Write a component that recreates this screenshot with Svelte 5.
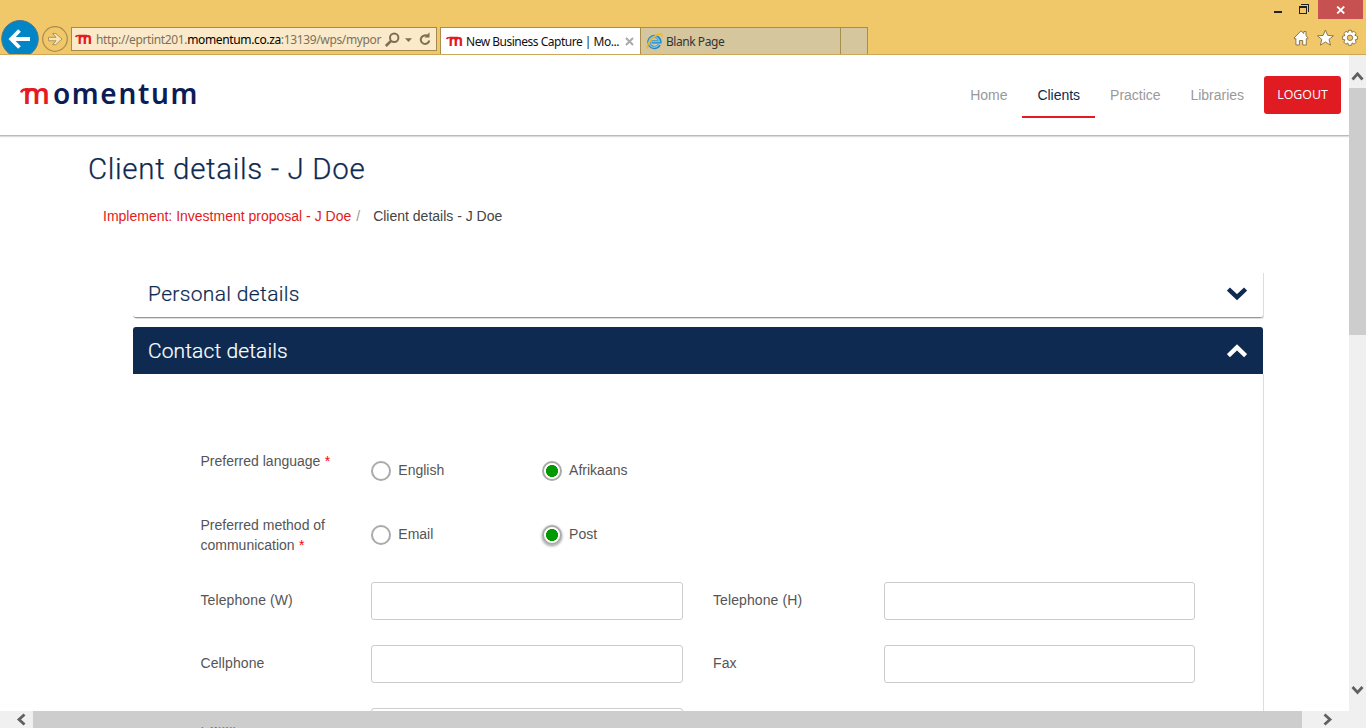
<script>
  const links = ['Home', 'Clients', 'Practice', 'Libraries'];
  const choices = [
    { label: 'Preferred language', options: ['English', 'Afrikaans'] },
    { label: 'Preferred method of communication', options: ['Email', 'Post'] }
  ];
  const fields = [['Telephone (W)', 'Telephone (H)'], ['Cellphone', 'Fax'], ['']];
</script>

{#snippet brand()}
  <svg class="brand" width="17" height="18" viewBox="0 0 17 18">
    <text x="2.4" y="12.5" textLength="14.6" lengthAdjust="spacingAndGlyphs">m</text>
    <path d="M.7 6C1 4.5 2 4.5 4 4.5H12" />
  </svg>
{/snippet}

<div class="window">
  <div class="chrome">
    <div class="bar">
      <svg class="nav-buttons" width="71" height="36" viewBox="0 0 71 36">
        <circle cx="20" cy="20.8" r="18.3" fill="#0085c7" stroke="#54748a" stroke-width="1" />
        <path d="M30 21H12M19.5 12.5L11.2 21L19.5 29.5" fill="none" stroke="#fff" stroke-width="3.8" />
        <circle cx="55" cy="21" r="12.3" fill="none" stroke="#a88c50" stroke-width="1.2" />
        <path d="M48.5 19.3H56L52.5 15.5H55.8L62 21L55.8 26.7H52.5L56 22.8H48.5Z" fill="#f8e4b8" stroke="#b09455" stroke-width="1" />
      </svg>
      <div class="address">
        {@render brand()}
        <span class="url">http://eprtint201.<b>momentum.co.za</b>:13139/wps/mypor</span>
        <svg width="50" height="22" viewBox="0 0 50 22" fill="none" stroke="#7d6f52" stroke-width="2">
          <circle cx="8.2" cy="9.8" r="4.2" />
          <path d="M5.2 12.8L-.2 18" stroke-width="2.6" />
          <path d="M19 10.2H26L22.5 14Z" fill="#7d6f52" stroke="none" />
          <path d="M42 8.5A4.3 4.3 0 1 0 43.3 12.5" />
          <path d="M43.5 4.2V9.5H38.5Z" fill="#7d6f52" stroke="none" />
        </svg>
      </div>
      <div class="tab active">
        {@render brand()}
        <span class="tab-one">New Business Capture | Mo...</span>
        <svg class="close-tab" width="9" height="9" viewBox="0 0 9 9"><path d="M1 1L8 8M8 1L1 8" stroke="#aaa" stroke-width="2" /></svg>
      </div>
      <div class="tab blank">
        <svg width="17" height="17" viewBox="0 0 17 17" fill="none">
          <path d="M13.3 11.7A5.6 5.6 0 1 1 14 8.9H5.5" stroke="#2686c5" stroke-width="3.2" />
          <path d="M12.7 11.7A5.2 5.2 0 1 1 13.4 8.6H5.5" stroke="#69c4ef" stroke-width="1.5" />
          <path d="M2.2 15.5C-.2 14 3 7.5 8 3.8C12 .8 16.5-.1 15.8 3.6" stroke="#f2b91d" stroke-width="1.7" />
        </svg>
        <span class="tab-two">Blank Page</span>
      </div>
      <div class="tab new"></div>
    </div>
    <div class="window-tools">
      <div class="window-buttons">
        <svg width="54" height="19" viewBox="0 0 54 19" fill="none" stroke="#222" shape-rendering="crispEdges">
          <path d="M10 12H18" stroke-width="2" />
          <path d="M35.5 6.5H42.5V13.5H35.5Z" stroke-width="1" />
          <path d="M35 7.5H43M37 4.5H44.5V12" stroke-width="1" />
        </svg>
        <div class="close"><svg width="10" height="8" viewBox="0 0 10 8"><path d="M1.2.5L8.2 7.5M8.2.5L1.2 7.5" stroke="#fff" stroke-width="1.8" /></svg></div>
      </div>
      <svg class="tools" width="68" height="18" viewBox="0 0 68 18" fill="#fff" stroke="#8e7848" stroke-width="1">
        <path d="M1 9L8 1.8L10.8 4.5V2.5H13V6.8L15.3 9L14.2 10.3L13.3 9.5V16H9.7V11.5H6.4V16H2.9V9.5L2 10.3Z" />
        <path d="M32.4 1L34.7 6.4L40.4 6.8L36 10.4L37.5 16.2L32.4 13L27.3 16.2L28.8 10.4L24.4 6.8L30.1 6.4Z" />
        <g transform="translate(57 8.8)">
          <path d="M-1.5-7.5H1.5L1.9-5.4L3.8-6.6L6-4.4L4.9-2.5L7.4-1.6V1.6L5.2 2L6.2 4.3L4.2 6.4L2.2 5.1L1.5 7.5H-1.5L-2.1 5.2L-4.1 6.4L-6.2 4.3L-5.1 2L-7.4 1.6V-1.6L-5.1-2.2L-6-4.4L-3.9-6.6L-2-5.2Z" />
          <circle r="2.7" fill="#f0c869" />
        </g>
      </svg>
    </div>
  </div>

  <div class="viewport">
    <div class="page">
      <header>
        <div class="logo">
          <svg width="13" height="8" viewBox="0 0 13 8"><path d="M1.2 5.6C1.8 2.6 3.5 2.3 12.5 2.3" fill="none" stroke="#e31b23" stroke-width="2.6" /></svg>
          <span class="red">m</span><span class="navy">omentum</span>
        </div>
        <nav>
          {#each links as link}
            <span class="link" class:current={link === 'Clients'}>{link}</span>
          {/each}
          <button>LOGOUT</button>
        </nav>
      </header>
      <main>
        <h1>Client details - J Doe</h1>
        <div class="crumbs"><span class="crumb">Implement: Investment proposal - J Doe</span><span class="slash">/</span><span>Client details - J Doe</span></div>
        <section class="panel personal">
          <h2>Personal details</h2>
          <svg width="20" height="14" viewBox="0 0 20 14"><path d="M1.4 2L10 10.2L18.6 2" /></svg>
        </section>
        <section class="panel contact">
          <h2>Contact details</h2>
          <svg width="20" height="14" viewBox="0 0 20 14"><path d="M1.4 11.6L10 3.4L18.6 11.6" /></svg>
        </section>
        <div class="form">
          {#each choices as choice}
            <div class="row choice">
              <div class="label">{choice.label}&nbsp;<i>*</i></div>
              {#each choice.options as option, n}
                <div class="option"><span class="radio" class:on={n === 1} class:focus={option === 'Post'}></span>{option}</div>
              {/each}
            </div>
          {/each}
          {#each fields as pair}
            <div class="row">
              {#each pair as field}
                <div class="field-label">{field}</div>
                <div class="input"></div>
              {/each}
            </div>
          {/each}
        </div>
      </main>
    </div>
    <div class="vbar">
      <svg width="17" height="33" viewBox="0 0 17 33"><path d="M3.5 24.5L8.5 18.8L13.5 24.5" /></svg>
      <div class="vthumb"></div>
      <svg width="17" height="17" viewBox="0 0 17 17"><path d="M3.5 3L8.5 8.5L13.5 3" /></svg>
    </div>
  </div>
  <div class="hbar">
    <svg width="33" height="17" viewBox="0 0 33 17"><path d="M24.5 3.5L19 8.5L24.5 13.5" /></svg>
    <div class="hthumb"><div class="peek">Email</div></div>
    <svg width="64" height="17" viewBox="0 0 64 17"><path d="M22.5 3.5L28 8.5L22.5 13.5" /></svg>
  </div>
</div>

<style>
  :global(body) { margin: 0; overflow: hidden; }
  * { box-sizing: border-box; }
  svg { display: block; flex: none; }
  .window { position: relative; width: 1366px; height: 728px; overflow: hidden; background: #fff; font-family: "Liberation Sans", Arial, sans-serif; font-size: 14px; }
  .chrome { height: 55px; background: #f0c869; border-bottom: 1px solid #cda757; display: flex; justify-content: space-between; overflow: hidden; }
  .bar { display: flex; padding-top: 27px; font: 12px/26px "Noto Sans", sans-serif; white-space: nowrap; }
  .nav-buttons { margin-top: -9px; }
  .address { width: 366px; height: 24px; border: 1px solid #a48a4c; background: #faeaca; display: flex; padding-left: 3px; margin-right: 3px; color: #7c715a; }
  .brand { margin-top: 3px; overflow: visible; }
  .brand text { font: 700 16px "Noto Sans", sans-serif; fill: #e31b23; }
  .brand path { fill: none; stroke: #e31b23; stroke-width: 1.7; }
  .url { width: 292px; margin-left: 4px; line-height: 24px; overflow: hidden; letter-spacing: -.36px; }
  .url b { color: #000; font-weight: 400; }
  .address svg:last-child { margin-left: -2px; overflow: visible; }
  .tab { height: 28px; border: 1px solid #a88d4c; border-bottom: 0; border-left-width: 0; display: flex; }
  .active { width: 201px; background: #fff; padding-left: 5px; border-left-width: 1px; color: #111; }
  .active .brand { margin-top: 5px; }
  .tab-one { width: 155px; margin-left: 3px; letter-spacing: -.49px; line-height: 27px; }
  .close-tab { margin: 9px 0 0 4px; }
  .blank { width: 200px; background: #d6c69e; padding: 5px; color: #333; }
  .tab-two { line-height: 18px; margin-left: 3px; letter-spacing: -.45px; }
  .new { width: 27px; background: #d6c69e; }
  .window-tools { width: 102px; }
  .window-buttons { display: flex; }
  .close { width: 45px; height: 19px; background: #c75050; display: grid; place-items: center; }
  .tools { margin: 10px 0 0 29px; }

  .viewport { height: 673px; display: flex; }
  .page { width: 1349px; height: 673px; overflow: hidden; flex: none; }
  header { height: 81px; border-bottom: 1px solid #bbb; box-shadow: 0 1px 1px #ddd; display: flex; justify-content: space-between; padding: 21px 8px 0 20px; }
  .logo { position: relative; height: 38px; font: 600 28px/35px "Noto Sans", sans-serif; white-space: nowrap; padding-left: 3px; }
  .logo svg { position: absolute; left: 0; top: 11px; }
  .red { color: #e31b23; }
  .navy { color: #0c1c54; letter-spacing: 1.65px; margin-left: 3px; }
  nav { display: flex; color: #999; }
  .link { height: 42px; padding: 0 15px; line-height: 39px; font-size: 14px; letter-spacing: -.02px; }
  .current { color: #0e2a50; border-bottom: 2px solid #e31b23; }
  button { width: 77px; height: 38px; margin-left: 5px; border: 0; border-radius: 3px; background: #e11b22; color: #fff; padding: 0 0 2px; font: 12.4px "Open Sans", sans-serif; }
  main { padding: 15px 86px 0 88px; }
  h1 { margin: 0; height: 37px; font: 300 29.5px/36px Roboto, sans-serif; letter-spacing: .65px; color: #0e2a50; -webkit-text-stroke: .25px #0e2a50; }
  .crumbs { display: flex; height: 20px; margin: 18px 0 46px 15px; line-height: 20px; color: #444; white-space: pre; }
  .crumb { color: #e11b22; }
  .slash { color: #999; margin: 0 13px 0 5px; }
  .panel { height: 46px; width: 1130px; margin-left: 45px; padding: 0 16px 2px 15px; display: flex; justify-content: space-between; align-items: center; }
  .panel path { fill: none; stroke: #0e2a50; stroke-width: 4.4; stroke-linecap: butt; }
  .personal { border-bottom: 1px solid #999; border-radius: 0 0 3px 3px; box-shadow: 1px 1px 0 #ddd; }
  .contact { height: 47px; margin-top: 9px; padding-bottom: 0; background: #0e2a50; border-radius: 3px 3px 0 0; }
  .contact path { stroke: #fff; }
  h2 { margin: 0; font: 300 21px/30px Roboto, sans-serif; letter-spacing: .34px; color: #0e2a50; -webkit-text-stroke: .2px #0e2a50; }
  .contact h2 { color: #fff; letter-spacing: .1px; -webkit-text-stroke-color: #fff; }
  .form { margin-left: 45px; width: 1131px; border-right: 1px solid #ddd; height: 420px; padding: 65px 0 0 67.5px; color: #555; line-height: 20px; }
  .row { display: grid; grid-template-columns: 170.8px 311.7px 170.8px 311.7px; height: 63px; padding-top: 12px; }
  .row > :nth-child(3) { margin-left: 30px; }
  .row > :nth-child(4) { margin-left: 30px; width: 311px; }
  .choice { grid-template-columns: repeat(3, 170.8px); height: 64px; }
  .choice > :nth-child(3) { margin-left: 0; }
  .choice:nth-child(2) { height: 67px; }
  .label { width: 140px; }
  i { color: red; font-style: normal; margin-left: .5px; }
  .option { display: flex; padding-top: 9px; height: 32px; }
  .radio { width: 20px; height: 20px; border: 2px solid #aaa; border-radius: 50%; margin: 1px 7px 0 0; }
  .on { background: radial-gradient(circle, #090 5.7px, #fff 6.3px); }
  .focus { box-shadow: 0 1px 3px #888; }
  .field-label { padding-top: 8px; letter-spacing: .1px; }
  .input { height: 38px; border: 1px solid #ccc; border-radius: 3px; }
  .vbar { width: 17px; height: 656px; background: #f0f0f0; display: flex; flex-direction: column; }
  .vthumb { height: 247px; background: #cdcdcd; margin-bottom: auto; }
  .vbar svg:last-child { margin-bottom: 10px; }
  .vbar path, .hbar path { fill: none; stroke: #606060; stroke-width: 2.8; }
  .hbar { position: absolute; left: 0; bottom: 0; width: 1366px; height: 17px; background: #f0f0f0; display: flex; }
  .hthumb { width: 1269px; background: #cdcdcd; padding: 16px 0 0 167.5px; }
  .peek { height: 1px; line-height: 4px; overflow: hidden; color: #777; }
</style>
